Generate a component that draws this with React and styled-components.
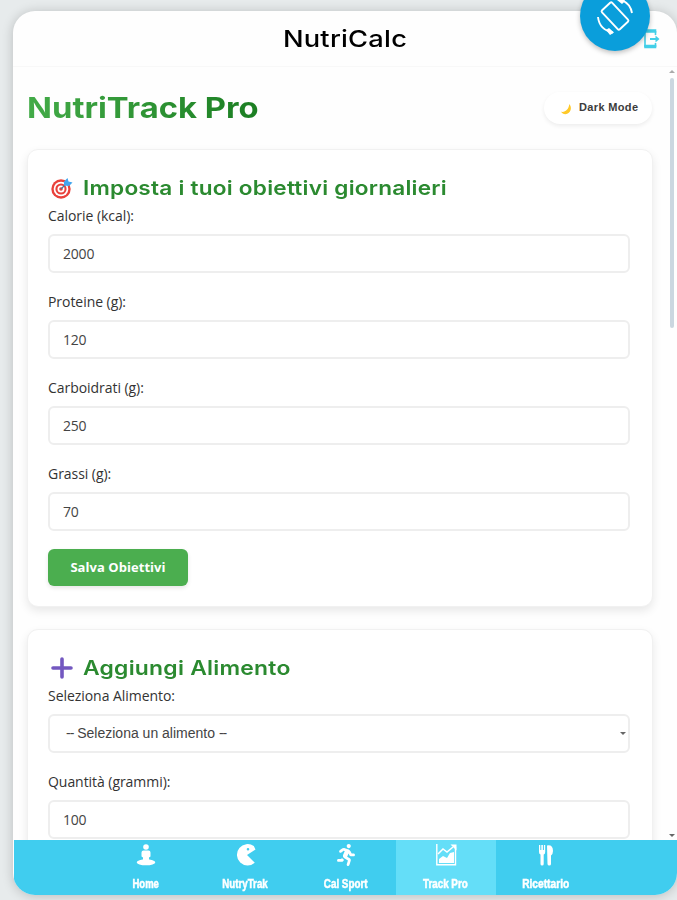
import React, { Component } from "react";
import styled, { createGlobalStyle } from "styled-components";
import { FaRunning } from "react-icons/fa";

const GlobalStyle = createGlobalStyle`
  * {
    box-sizing: border-box;
  }
  body {
    margin: 0;
    background: #e7ebec;
    font-family: "Open Sans", "Noto Sans", sans-serif;
    color: #333;
    overflow: hidden;
  }
`;

const Page = styled.div`
  position: relative;
  height: 900px;
  padding: 11px 0 5px 13px;
  overflow: hidden;
`;

const Shell = styled.div`
  display: flex;
  flex-direction: column;
  height: 884px;
  background: #fefefe;
  border-radius: 22px;
  box-shadow: 0 1px 12px rgba(0, 0, 0, 0.2);
  overflow: hidden;
`;

const Header = styled.header`
  flex: none;
  display: grid;
  grid-template-columns: 34px 1fr 34px;
  align-items: center;
  height: 56px;
  border-bottom: 1px solid #f8f8f8;
`;

const AppName = styled.h1`
  grid-column: 2;
  margin: 0;
  text-align: center;
  font: 500 23.5px/30px Inter, sans-serif;
  letter-spacing: 0.2px;
  color: #000;
  transform: scaleX(1.16);
`;

const Exit = styled.span`
  display: flex;
  svg {
    width: 17px;
    height: 20px;
  }
`;

const Body = styled.div`
  flex: 1;
  display: flex;
  min-height: 0;
`;

const Content = styled.main`
  flex: 1;
  min-width: 0;
  padding: 0 11px 0 14px;
  overflow: hidden;
`;

const Scrollbar = styled.div`
  flex: none;
  display: flex;
  flex-direction: column;
  align-items: center;
  width: 13px;
  padding: 3px 0 3px 3px;
`;

const Thumb = styled.div`
  width: 4px;
  height: 250px;
  margin: 5px 0 auto;
  border-radius: 2px;
  background: #cbd7e0;
`;

const Arrow = styled.i`
  border: 3px solid transparent;
  border-width: ${props => (props.$up ? "0 3px 3px" : "3px 3px 0")};
  border-color: ${props =>
    props.$up ? "transparent transparent #aaa" : "#666 transparent transparent"};
`;

const TitleRow = styled.div`
  display: flex;
  align-items: center;
  justify-content: space-between;
  height: 82px;
`;

const Title = styled.h2`
  margin: 0;
  font: 700 29px/36px Inter, sans-serif;
  color: transparent;
  background: linear-gradient(90deg, #43ab48, #1b7e22);
  background-clip: text;
  transform: scaleX(1.13);
  transform-origin: left;
`;

const DarkMode = styled.button`
  display: flex;
  align-items: center;
  gap: 7px;
  width: 108px;
  height: 32px;
  padding: 0 0 2px 16px;
  margin-right: 1px;
  border: none;
  border-radius: 16px;
  background: #fff;
  box-shadow: 0 2px 4px rgba(0, 0, 0, 0.07);
  font: 600 11px "Liberation Sans", Arial, sans-serif;
  letter-spacing: 0.35px;
  color: #3c3c3c;
  white-space: nowrap;
  svg {
    flex: none;
    width: 12px;
    height: 12px;
    margin-top: 4px;
  }
`;

const Card = styled.section`
  height: 458px;
  margin-bottom: 22px;
  padding: 24px 22px 0 20px;
  border: 1px solid #f1f1f1;
  border-radius: 11px;
  background: #fff;
  box-shadow: 0 4px 10px rgba(0, 0, 0, 0.09);
`;

const CardTitle = styled.h3`
  display: flex;
  align-items: center;
  gap: 10px;
  height: 28px;
  margin: 0;
  padding-left: 3px;
  font: 600 20px/28px Inter, sans-serif;
  color: #2b8a30;
  white-space: nowrap;
  svg {
    flex: none;
    width: 22px;
    height: 22px;
  }
`;

const Stretch = styled.span`
  letter-spacing: 0.2px;
  transform: scaleX(${props => props.$by});
  transform-origin: left;
`;

const Field = styled.label`
  display: block;
  height: 86px;
  padding-top: 5px;
  font-size: 14px;
  line-height: 18px;
  letter-spacing: -0.05px;
  font-weight: 500;
`;

const Control = styled.div`
  display: flex;
  align-items: center;
  justify-content: space-between;
  height: 39px;
  margin-top: 9px;
  padding: 0 2px 1px 13px;
  border: 2px solid #eeeeee;
  border-radius: 6px;
  background: #fff;
`;

const Input = styled.input`
  width: 100%;
  padding: 0;
  border: none;
  outline: none;
  background: none;
  font: 400 14px "Open Sans", sans-serif;
  letter-spacing: -0.2px;
  color: #444;
`;

const Placeholder = styled.span`
  padding-left: 3px;
  font: 400 14px "Liberation Sans", Arial, sans-serif;
  letter-spacing: 0;
  color: #444;
  span {
    letter-spacing: -1px;
  }
`;

const Save = styled.button`
  display: block;
  width: 140px;
  height: 37px;
  margin-top: 3px;
  padding: 0 0 2px;
  border: none;
  border-radius: 6px;
  background: #4bae4f;
  box-shadow: 0 2px 4px rgba(0, 0, 0, 0.1);
  font: 700 13px "Open Sans", sans-serif;
  letter-spacing: 0.05px;
  color: #fff;
`;

const Nav = styled.nav`
  flex: none;
  display: flex;
  justify-content: center;
  height: 55px;
  margin-left: 1px;
  background: #40cdef;
`;

const NavItem = styled.a`
  display: flex;
  flex-direction: column;
  align-items: center;
  width: 100px;
  padding-top: 4px;
  background: ${props => (props.$active ? "#64def8" : "none")};
  color: #fff;
  svg {
    width: 22px;
    height: 22px;
  }
`;

const NavLabel = styled.span`
  margin-top: 11px;
  font: 700 12px/15px "Liberation Sans Narrow", "Liberation Sans", sans-serif;
  white-space: nowrap;
  -webkit-text-stroke: 0.5px #fff;
  transform: scaleX(${props => props.$squeeze});
`;

const Rotate = styled.button`
  position: absolute;
  top: -19px;
  left: 580px;
  display: flex;
  align-items: center;
  justify-content: center;
  width: 70px;
  height: 70px;
  padding: 0;
  border: none;
  border-radius: 50%;
  background: #0a9edb;
  box-shadow: 0 2px 5px rgba(0, 0, 0, 0.25);
  svg {
    width: 38px;
    height: 38px;
  }
`;

const RotateIcon = () => (
  <svg viewBox="0 0 38 38" fill="none" stroke="#fff" strokeWidth="1.9">
    <rect x="12" y="6" width="14" height="26" rx="1.5" transform="rotate(-43 19 19)" />
    <path d="M25 3c6 2 10 7 11 13M17 35.500C9 34 3 29 2 20" />
    <path d="M21 3l5-3 3 4-3 3zM18 35.500l-4 2.500-4-5 3-2z" fill="#fff" stroke="none" />
  </svg>
);

const ExitIcon = () => (
  <svg viewBox="0 0 17 20" fill="none" stroke="#42cfe8">
    <path d="M2 2v16M12.500 2v4M12.500 14v4" strokeWidth="1.6" />
    <path d="M1.200 2h12.100M1.200 17.500h12.100" strokeWidth="3.6" />
    <path d="M7 10h7" strokeWidth="1.800" />
    <path d="M12.500 6.500l4 3.500-4 3.500z" fill="#42cfe8" stroke="none" />
  </svg>
);

const MoonIcon = () => (
  <svg viewBox="0 0 14 14">
    <path d="M10.8 1.2C14 5 13 10.2 9 12.3 6 13.8 2.7 12.7 1.3 10.3c5 1 9.300-3.500 9.500-9.100z" fill="#ffc928" />
  </svg>
);

const TargetIcon = () => (
  <svg viewBox="0 0 22 22">
    <circle cx="10" cy="12" r="9.700" fill="#e9413b" />
    <circle cx="10" cy="12" r="7.300" fill="#fff" />
    <circle cx="10" cy="12" r="5.600" fill="#e9413b" />
    <circle cx="10" cy="12" r="3.500" fill="#fff" />
    <circle cx="10" cy="12" r="1.800" fill="#e9413b" />
    <path d="M10 12l7-7" stroke="#46789e" strokeWidth="1.300" />
    <path d="M13 8.500V4.500L16.500 1l1 3.500L21.500 5.500 18 9z" fill="#42a5ee" />
  </svg>
);

const PlusIcon = () => (
  <svg viewBox="0 0 22 22">
    <path d="M11 2v18M2 11h18" stroke="#7358c0" strokeWidth="3.600" strokeLinecap="round" />
  </svg>
);

const MeditateIcon = () => (
  <svg viewBox="0 0 22 22" fill="#fff">
    <circle cx="11" cy="3" r="2.800" />
    <path d="M8.500 6.500h5q2 0 2 2v4l-1.500 1v4h-6v-4l-1.500-1v-4q0-2 2-2z" />
    <ellipse cx="11" cy="18.300" rx="9.300" ry="3" />
  </svg>
);

const PacmanIcon = () => (
  <svg viewBox="0 0 22 22">
    <path
      d="M18.800 2A10.700 10.700 0 1 0 19.800 18.700L12 11 20.500 5.500zM13 4a1.300 1.300 0 1 1 0 2.600 1.300 1.300 0 0 1 0-2.600z"
      fill="#fff"
      fillRule="evenodd"
    />
  </svg>
);

const ChartIcon = () => (
  <svg viewBox="0 0 22 22" fill="none" stroke="#fff">
    <path d="M1.800 0v20.700H20.500V3" strokeWidth="1.400" />
    <path d="M3 10l5-5 4 3 6-5" strokeWidth="1.500" />
    <path d="M15.500.500h6v6z" fill="#fff" stroke="none" />
    <path d="M4 19v-4l4-3 4 2 3-5 4-1v11z" fill="#fff" stroke="none" />
  </svg>
);

const CutleryIcon = () => (
  <svg viewBox="0 0 22 22" fill="#fff">
    <path d="M4 1h1.300v5h1V1h1.600v5h1V1h1.300v7q0 2-1.500 2.500V20q0 1.500-1.600 1.500T5.500 20v-9.500Q4 10 4 8z" />
    <path d="M12 1.500q6-1 6 5.500 0 3-2 4.500V20q0 1.500-1.700 1.500T12.500 20z" />
  </svg>
);

const goals = [
  { name: "calories", label: "Calorie (kcal):" },
  { name: "proteins", label: "Proteine (g):" },
  { name: "carbs", label: "Carboidrati (g):" },
  { name: "fats", label: "Grassi (g):" }
];

const links = [
  { label: "Home", icon: MeditateIcon, squeeze: 0.79 },
  { label: "NutryTrak", icon: PacmanIcon, squeeze: 0.81 },
  { label: "Cal Sport", icon: FaRunning, squeeze: 0.82 },
  { label: "Track Pro", icon: ChartIcon, active: true, squeeze: 0.82 },
  { label: "Ricettario", icon: CutleryIcon, squeeze: 0.85 }
];

class App extends Component {
  state = {
    calories: "2000",
    proteins: "120",
    carbs: "250",
    fats: "70",
    quantity: "100"
  };

  handleChange = e => {
    this.setState({ [e.target.name]: e.target.value });
  };

  renderField = ({ name, label }) => (
    <Field key={name}>
      {label}
      <Control>
        <Input
          type="text"
          name={name}
          value={this.state[name]}
          onChange={this.handleChange}
        />
      </Control>
    </Field>
  );

  render() {
    return (
      <Page>
        <GlobalStyle />
        <Shell>
          <Header>
            <AppName>NutriCalc</AppName>
            <Exit>
              <ExitIcon />
            </Exit>
          </Header>
          <Body>
            <Content>
              <TitleRow>
                <Title>NutriTrack Pro</Title>
                <DarkMode>
                  <MoonIcon />
                  Dark Mode
                </DarkMode>
              </TitleRow>
              <Card>
                <CardTitle>
                  <TargetIcon />
                  <Stretch $by={1.13}>Imposta i tuoi obiettivi giornalieri</Stretch>
                </CardTitle>
                {goals.map(this.renderField)}
                <Save>Salva Obiettivi</Save>
              </Card>
              <Card>
                <CardTitle>
                  <PlusIcon />
                  <Stretch $by={1.145}>Aggiungi Alimento</Stretch>
                </CardTitle>
                <Field>
                  Seleziona Alimento:
                  <Control>
                    <Placeholder>
                      <span>--</span> Seleziona un alimento <span>--</span>
                    </Placeholder>
                    <Arrow />
                  </Control>
                </Field>
                {this.renderField({ name: "quantity", label: "Quantità (grammi):" })}
              </Card>
            </Content>
            <Scrollbar>
              <Arrow $up />
              <Thumb />
              <Arrow />
            </Scrollbar>
          </Body>
          <Nav>
            {links.map(({ label, icon: Icon, active, squeeze }) => (
              <NavItem key={label} $active={active}>
                <Icon />
                <NavLabel $squeeze={squeeze}>{label}</NavLabel>
              </NavItem>
            ))}
          </Nav>
        </Shell>
        <Rotate>
          <RotateIcon />
        </Rotate>
      </Page>
    );
  }
}

export default App;
